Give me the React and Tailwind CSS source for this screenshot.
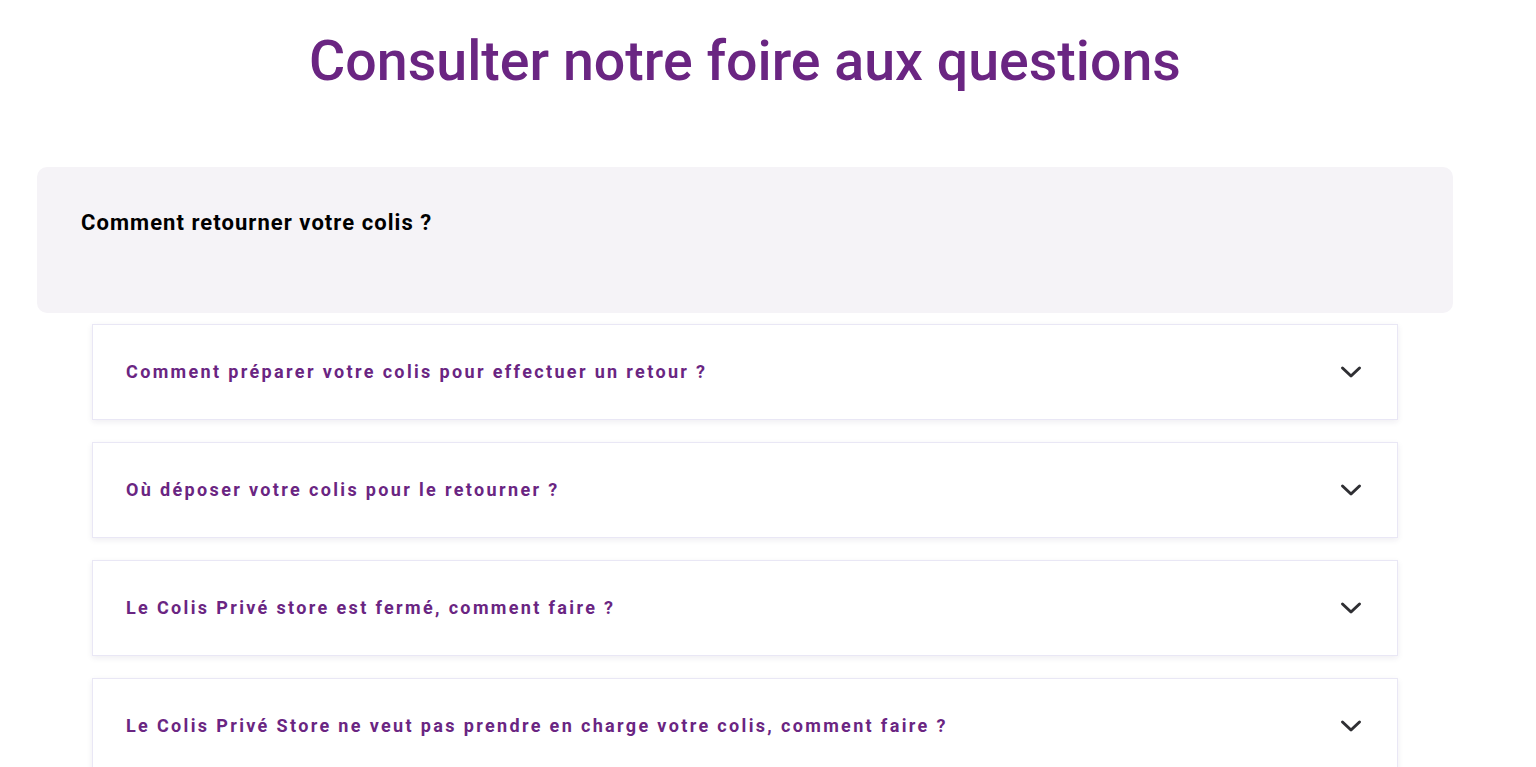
import React from 'react';

const questions = [
  'Comment préparer votre colis pour effectuer un retour ?',
  'Où déposer votre colis pour le retourner ?',
  'Le Colis Privé store est fermé, comment faire ?',
  'Le Colis Privé Store ne veut pas prendre en charge votre colis, comment faire ?',
];

const Chevron = () => (
  <svg width="22" height="14" viewBox="0 0 22 14" fill="none" className="shrink-0">
    <polyline points="2.5,3 11,11 19.5,3" stroke="#2f2f33" strokeWidth="3" strokeLinecap="round" strokeLinejoin="round" />
  </svg>
);

const App = () => {
  return (
    <div className="min-h-screen bg-white font-['Roboto',sans-serif] overflow-hidden">
      <div className="w-[1416px] ml-[37px]">
        <h1 className="text-center text-[55.5px] leading-none font-medium text-[#6a2582] pt-[34px] pb-[77px]">
          Consulter notre foire aux questions
        </h1>

        <div className="bg-[#f5f3f7] rounded-[10px] h-[146px] px-[44px] pt-[44px]">
          <h2 className="text-[22px] font-bold tracking-[1.05px] text-black leading-6">Comment retourner votre colis ?</h2>
        </div>

        <div className="mx-[55px] mt-[11px] flex flex-col gap-[22px]">
          {questions.map((q, i) => (
            <div
              key={i}
              className="h-[96px] bg-white border border-[#e9e7f5] shadow-[0_2px_6px_rgba(40,30,80,0.08)] flex items-center justify-between pl-[33px] pr-[35px]"
            >
              <span className="text-[18px] font-bold tracking-[2.35px] text-[#6a2582]">{q}</span>
              <Chevron />
            </div>
          ))}
        </div>
      </div>
    </div>
  );
};

export default App;
